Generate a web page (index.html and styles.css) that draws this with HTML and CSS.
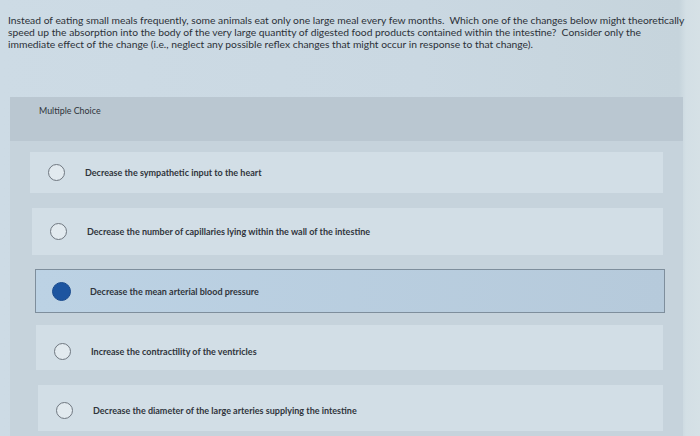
FILE: index.html
```html
<!DOCTYPE html>
<html>
<head>
<meta charset="utf-8">
<link rel="stylesheet" href="styles.css">
</head>
<body>
<div class="question">Instead of eating small meals frequently, some animals eat only one large meal every few months.&nbsp; Which one of the changes below might theoretically speed up the absorption into the body of the very large quantity of digested food products contained within the intestine?&nbsp; Consider only the immediate effect of the change (i.e., neglect any possible reflex changes that might occur in response to that change).</div>
<div class="panel">
  <div class="panel-head">Multiple Choice</div>
  <div class="options">
    <div class="option o1"><span class="radio"></span><span class="label">Decrease the sympathetic input to the heart</span></div>
    <div class="option o2"><span class="radio"></span><span class="label">Decrease the number of capillaries lying within the wall of the intestine</span></div>
    <div class="option o3 selected"><span class="radio checked"></span><span class="label">Decrease the mean arterial blood pressure</span></div>
    <div class="option o4"><span class="radio"></span><span class="label">Increase the contractility of the ventricles</span></div>
    <div class="option o5"><span class="radio"></span><span class="label">Decrease the diameter of the large arteries supplying the intestine</span></div>
  </div>
</div>
</body>
</html>
```
FILE: styles.css
```css
html, body {
  margin: 0;
  padding: 0;
  height: 100%;
  overflow: hidden;
}
body {
  background: linear-gradient(90deg, #cddbe5 0%, #cad8e2 60%, #c6d4dc 97%, #d3dfe5 98%, #d6e1e6 100%);
  font-family: "Lato", "Liberation Sans", sans-serif;
  color: #2c3138;
}
.question {
  padding: 15px 15px 0 8px;
  font-size: 10.3px;
  line-height: 11.8px;
  height: 97px;
  box-sizing: border-box;
  width: 700px;
}
.panel {
  margin-left: 10px;
  width: 673px;
  height: 339px;
  background: #c6d3dc;
}
.panel-head {
  background: #bac7d1;
  height: 44px;
  padding: 8px 0 0 29px;
  box-sizing: border-box;
  font-size: 8.9px;
  color: #2f343b;
}
.options {
  display: flex;
  flex-direction: column;
  padding-top: 11px;
}
.option {
  display: flex;
  align-items: center;
  height: 44px;
  background: #d2dee6;
  box-sizing: border-box;
  font-size: 9px;
  font-weight: 700;
  color: #30353c;
}
.o1 { margin-left: 20px; width: 633px; height: 41px; }
.o2 { margin-left: 22px; width: 631px; height: 47px; margin-top: 15px; }
.o3 { margin-left: 25px; width: 630px; margin-top: 14px; }
.o4 { margin-left: 26px; width: 627px; height: 45px; margin-top: 12px; padding-top: 8px; }
.o5 { margin-left: 28px; width: 625px; height: 46px; margin-top: 15px; padding-top: 4px; }
.option.selected {
  background: linear-gradient(90deg, #bcd2e4, #b6cadb);
  border: 1px solid #7e8e9c;
}
.radio {
  width: 17px;
  height: 17px;
  border: 1.3px solid #6f7780;
  border-radius: 50%;
  box-sizing: border-box;
  margin-left: 18px;
  flex: none;
  background: #e2eaef;
}
.radio.checked {
  background: #1d55a0;
  border-color: #1a4b8e;
  width: 19px;
  height: 19px;
  margin-left: 16px;
}
.label {
  margin-left: 20px;
  white-space: nowrap;
}
.o3 .label { margin-left: 19px; }
```
